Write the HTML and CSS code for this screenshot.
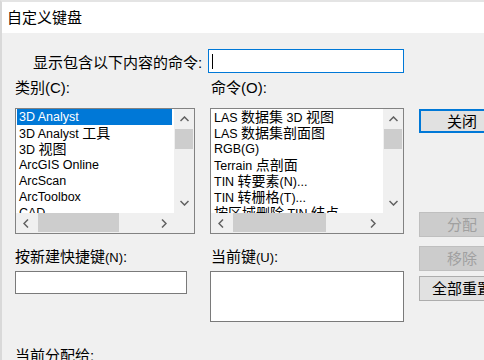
FILE: index.html
```html
<!DOCTYPE html>
<html lang="zh">
<head>
<meta charset="utf-8">
<title>自定义键盘</title>
<link rel="stylesheet" href="styles.css">
</head>
<body>
<div class="window">
  <div class="titlebar">自定义键盘</div>
  <div class="filter-row">
    <label class="filter-label">显示包含以下内容的命令:</label>
    <div class="filter-input"><span class="caret"></span></div>
  </div>
  <div class="main">
    <div class="label top-label col-left">类别(C):</div>
    <div class="label top-label col-right right-label">命令(O):</div>

    <div class="listbox col-left">
      <div class="items">
        <div class="item selected">3D Analyst</div>
        <div class="item">3D Analyst <span class="cjk">工具</span></div>
        <div class="item">3D <span class="cjk">视图</span></div>
        <div class="item">ArcGIS Online</div>
        <div class="item">ArcScan</div>
        <div class="item">ArcToolbox</div>
        <div class="item">CAD</div>
      </div>
      <div class="vscroll">
        <div class="sb-btn"><svg width="9" height="6" viewBox="0 0 9 6"><polyline points="0.5,5 4.5,1 8.5,5" fill="none" stroke="#606060" stroke-width="1.5"/></svg></div>
        <div class="vthumb"></div>
        <div class="sb-fill"></div>
        <div class="sb-btn"><svg width="9" height="6" viewBox="0 0 9 6"><polyline points="0.5,1 4.5,5 8.5,1" fill="none" stroke="#606060" stroke-width="1.5"/></svg></div>
      </div>
      <div class="hscroll">
        <div class="sb-btn"><svg width="6" height="9" viewBox="0 0 6 9"><polyline points="5,0.5 1,4.5 5,8.5" fill="none" stroke="#606060" stroke-width="1.5"/></svg></div>
        <div class="hthumb" style="width:81px"></div>
        <div class="sb-fill"></div>
        <div class="sb-btn"><svg width="6" height="9" viewBox="0 0 6 9"><polyline points="1,0.5 5,4.5 1,8.5" fill="none" stroke="#606060" stroke-width="1.5"/></svg></div>
      </div>
      <div class="corner"></div>
    </div>

    <div class="listbox col-right">
      <div class="items">
        <div class="item">LAS <span class="cjk">数据集</span> 3D <span class="cjk">视图</span></div>
        <div class="item">LAS <span class="cjk">数据集剖面图</span></div>
        <div class="item">RGB(G)</div>
        <div class="item">Terrain <span class="cjk">点剖面</span></div>
        <div class="item">TIN <span class="cjk">转要素</span>(N)...</div>
        <div class="item">TIN <span class="cjk">转栅格</span>(T)...</div>
        <div class="item"><span class="cjk">按区域删除</span> TIN <span class="cjk">结点</span></div>
      </div>
      <div class="vscroll">
        <div class="sb-btn"><svg width="9" height="6" viewBox="0 0 9 6"><polyline points="0.5,5 4.5,1 8.5,5" fill="none" stroke="#606060" stroke-width="1.5"/></svg></div>
        <div class="vthumb"></div>
        <div class="sb-fill"></div>
        <div class="sb-btn"><svg width="9" height="6" viewBox="0 0 9 6"><polyline points="0.5,1 4.5,5 8.5,1" fill="none" stroke="#606060" stroke-width="1.5"/></svg></div>
      </div>
      <div class="hscroll">
        <div class="sb-btn"><svg width="6" height="9" viewBox="0 0 6 9"><polyline points="5,0.5 1,4.5 5,8.5" fill="none" stroke="#606060" stroke-width="1.5"/></svg></div>
        <div class="hthumb" style="width:93px"></div>
        <div class="sb-fill"></div>
        <div class="sb-btn"><svg width="6" height="9" viewBox="0 0 6 9"><polyline points="1,0.5 5,4.5 1,8.5" fill="none" stroke="#606060" stroke-width="1.5"/></svg></div>
      </div>
      <div class="corner"></div>
    </div>

    <div class="buttons">
      <button class="btn default">关闭</button>
      <button class="btn disabled btn-assign">分配</button>
      <button class="btn disabled btn-remove">移除</button>
      <button class="btn btn-reset">全部重置</button>
    </div>

    <div class="label mid-label col-left">按新建快捷键<span class="hotkey">(N)</span>:</div>
    <div class="label mid-label col-right right-label">当前键<span class="hotkey">(U)</span>:</div>

    <div class="textbox"></div>
    <div class="keybox"></div>

    <div class="label bottom-label">当前分配给:</div>
  </div>
</div>
</body>
</html>
```
FILE: styles.css
```css
* { box-sizing: border-box; }
html, body {
  margin: 0;
  padding: 0;
}
body {
  width: 484px;
  height: 360px;
  overflow: hidden;
  background: #f0f0f0;
  font-family: "Liberation Sans", "Noto Sans CJK SC", sans-serif;
  color: #000;
}
.window {
  width: 484px;
  height: 360px;
  border-top: 2px solid #e4e4e4;
  border-left: 2px solid #d9d9d9;
  background: #f0f0f0;
  overflow: hidden;
}
.titlebar {
  height: 31px;
  line-height: 31px;
  background: #fff;
  padding-left: 5px;
  font-size: 15px;
}
.filter-row {
  display: flex;
  align-items: center;
  margin-top: 16px;
  height: 24px;
}
.filter-label {
  width: 201px;
  padding-left: 31px;
  font-size: 15px;
  white-space: nowrap;
}
.filter-input {
  margin-left: 5px;
  width: 196px;
  height: 24px;
  border: 1px solid #0078d7;
  background: #fff;
  display: flex;
  align-items: center;
  padding-left: 3px;
}
.caret {
  width: 1px;
  height: 15px;
  background: #000;
}
.main {
  display: grid;
  grid-template-columns: 180px 194px 86px;
  grid-template-rows: 30px 126px 37px 51px auto;
  column-gap: 15px;
  margin-top: 5px;
  padding-left: 13px;
}
.col-left { grid-column: 1; }
.col-right { grid-column: 2; }
.label {
  font-size: 15px;
  line-height: 20px;
  white-space: nowrap;
}
.right-label { padding-left: 1px; }
.top-label { grid-row: 1; align-self: start; }
.mid-label { grid-row: 3; align-self: end; margin-bottom: 3px; }
.hotkey { font-size: 13px; }
.bottom-label { grid-column: 1; grid-row: 5; margin-top: 24px; }

.listbox {
  grid-row: 2;
  border: 1px solid #828282;
  background: #fff;
  display: grid;
  grid-template-columns: 1fr 20px;
  grid-template-rows: 1fr 20px;
  overflow: hidden;
}
.items {
  overflow: hidden;
  padding: 0 2px 0 1px;
}
.item {
  height: 16px;
  line-height: 16px;
  font-size: 12.5px;
  padding-left: 2px;
  white-space: nowrap;
}
.item .cjk { font-size: 14px; }
.item.selected {
  background: #0078d7;
  color: #fff;
}
.vscroll {
  background: #f0f0f0;
  display: flex;
  flex-direction: column;
}
.hscroll {
  background: #f0f0f0;
  display: flex;
}
.sb-btn {
  width: 20px;
  height: 20px;
  flex: none;
  display: flex;
  align-items: center;
  justify-content: center;
}
.sb-btn svg { display: block; }
.sb-fill { flex: 1; }
.vthumb {
  height: 20px;
  margin: 0 1px;
  background: #cdcdcd;
  flex: none;
}
.hthumb {
  height: 19px;
  margin: 0 0 0 2px;
  background: #cdcdcd;
  flex: none;
}
.corner { background: #f0f0f0; }

.buttons {
  grid-column: 3;
  grid-row: 2 / 5;
  display: flex;
  flex-direction: column;
}
.btn {
  font-family: "Liberation Sans", "Noto Sans CJK SC", sans-serif;
  font-size: 15px;
  width: 86px;
  height: 25px;
  padding: 0;
  border: 1px solid #adadad;
  background: #e1e1e1;
  color: #000;
  line-height: 21px;
}
.btn.default {
  margin-top: 1px;
  height: 24px;
  border: 2px solid #0078d7;
}
.btn.disabled {
  background: #cccccc;
  border-color: #bfbfbf;
  color: #a0a0a0;
}
.btn-assign { margin-top: 79px; }
.btn-remove { margin-top: 9px; }
.btn-reset { margin-top: 5px; }

.textbox {
  grid-column: 1;
  grid-row: 4;
  width: 172px;
  height: 23px;
  border: 1px solid #7a7a7a;
  background: #fff;
}
.keybox {
  grid-column: 2;
  grid-row: 4;
  height: 51px;
  border: 1px solid #7a7a7a;
  background: #fff;
}
```
